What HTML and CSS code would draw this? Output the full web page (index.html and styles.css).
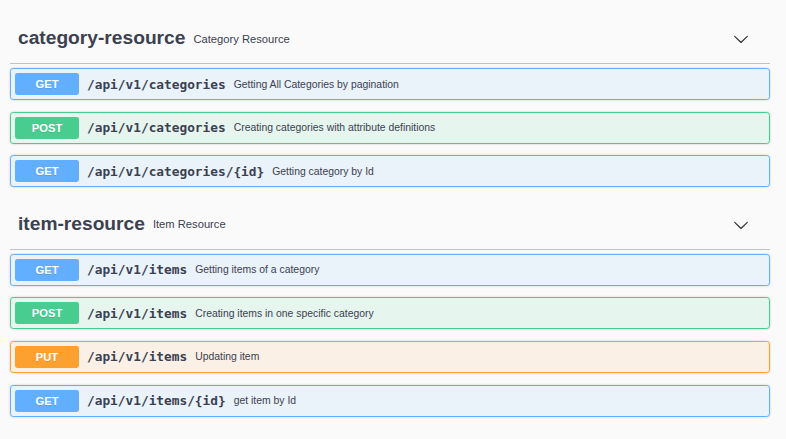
FILE: index.html
```html
<!DOCTYPE html>
<html lang="en">
<head>
<meta charset="utf-8">
<title>API</title>
<link rel="stylesheet" href="styles.css">
</head>
<body>
<div class="wrapper">
  <section class="tag-section">
    <h3 class="tag">
      <span class="tag-name">category-resource</span>
      <small class="tag-desc">Category Resource</small>
      <svg class="arrow" viewBox="0 0 20 20" width="16" height="16"><path d="M17.418 6.109c.272-.268.709-.268.979 0s.271.701 0 .969l-7.908 7.83c-.27.268-.707.268-.979 0l-7.908-7.83c-.27-.268-.27-.701 0-.969.271-.268.709-.268.979 0L10 13.25l7.418-7.141z"/></svg>
    </h3>
    <div class="opblock get"><span class="method">GET</span><span class="path">/api/v1/categories</span><span class="desc">Getting All Categories by pagination</span></div>
    <div class="opblock post"><span class="method">POST</span><span class="path">/api/v1/categories</span><span class="desc">Creating categories with attribute definitions</span></div>
    <div class="opblock get"><span class="method">GET</span><span class="path">/api/v1/categories/{id}</span><span class="desc">Getting category by Id</span></div>
  </section>
  <section class="tag-section">
    <h3 class="tag">
      <span class="tag-name">item-resource</span>
      <small class="tag-desc">Item Resource</small>
      <svg class="arrow" viewBox="0 0 20 20" width="16" height="16"><path d="M17.418 6.109c.272-.268.709-.268.979 0s.271.701 0 .969l-7.908 7.83c-.27.268-.707.268-.979 0l-7.908-7.83c-.27-.268-.27-.701 0-.969.271-.268.709-.268.979 0L10 13.25l7.418-7.141z"/></svg>
    </h3>
    <div class="opblock get"><span class="method">GET</span><span class="path">/api/v1/items</span><span class="desc">Getting items of a category</span></div>
    <div class="opblock post"><span class="method">POST</span><span class="path">/api/v1/items</span><span class="desc">Creating items in one specific category</span></div>
    <div class="opblock put"><span class="method">PUT</span><span class="path">/api/v1/items</span><span class="desc">Updating item</span></div>
    <div class="opblock get"><span class="method">GET</span><span class="path">/api/v1/items/{id}</span><span class="desc">get item by Id</span></div>
  </section>
</div>
</body>
</html>
```

FILE: styles.css
```css
html, body {
  margin: 0;
  padding: 0;
  background: #fafafa;
  color: #3b4151;
  font-family: "Liberation Sans", Arial, sans-serif;
}

.wrapper {
  padding: 13px 16px 0 10px;
  width: 760px;
}

.tag-section {
  display: flex;
  flex-direction: column;
}

.tag {
  display: flex;
  align-items: center;
  margin: 0 0 4px;
  padding: 8px 16px 8px 8px;
  height: 34px;
  border-bottom: 1px solid rgba(59, 65, 81, 0.3);
  font-weight: 700;
}

.tag-name {
  font-size: 19.2px;
  font-weight: 700;
  color: #3b4151;
}

.tag-desc {
  flex: 1;
  padding-left: 8px;
  font-size: 11.2px;
  font-weight: 400;
  color: #3b4151;
  padding-top: 1px;
}

.arrow {
  fill: #333;
  margin-right: 5px;
  margin-top: 2px;
}

.opblock {
  display: flex;
  align-items: center;
  padding: 4px;
  margin: 0 0 11.6px;
  border: 1px solid;
  border-radius: 3.2px;
  box-shadow: 0 0 2.4px rgba(0, 0, 0, 0.19);
}

.method {
  box-sizing: border-box;
  width: 64px;
  height: 22px;
  display: flex;
  align-items: center;
  justify-content: center;
  border-radius: 2.4px;
  color: #fff;
  font-size: 11.2px;
  font-weight: 700;
  text-shadow: 0 1px 0 rgba(0, 0, 0, 0.1);
}

.path {
  padding: 0 8px 0 8px;
  font-family: "DejaVu Sans Mono", monospace;
  font-size: 12.8px;
  font-weight: 700;
  color: #3b4151;
}

.desc {
  font-size: 10.4px;
  color: #3b4151;
}

.get {
  border-color: #61affe;
  background: rgba(97, 175, 254, 0.1);
}
.get .method { background: #61affe; }

.post {
  border-color: #49cc90;
  background: rgba(73, 204, 144, 0.1);
}
.post .method { background: #49cc90; }

.put {
  border-color: #fca130;
  background: rgba(252, 161, 48, 0.1);
}
.put .method { background: #fca130; }
```
